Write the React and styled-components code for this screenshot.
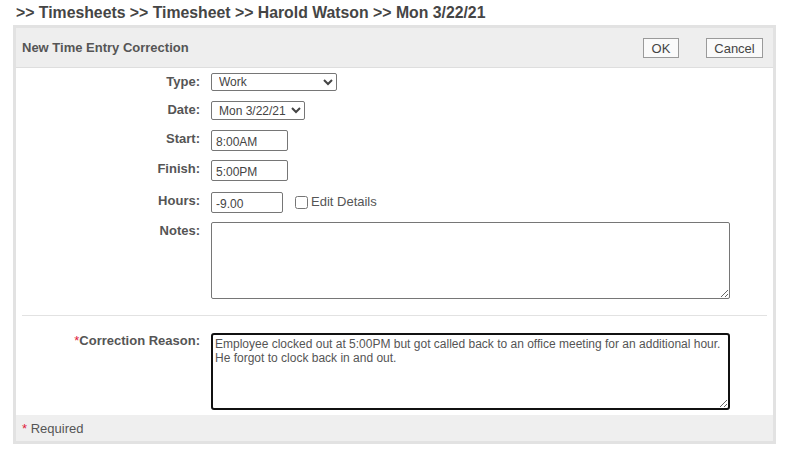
import React from "react"
import styled, { createGlobalStyle } from "styled-components"

const GlobalStyle = createGlobalStyle`
  body {
    margin: 0;
    background: #fff;
    font-family: "Liberation Sans", Arial, sans-serif;
  }
`

const Page = styled.div`
  width: 792px;
  height: 451px;
  overflow: hidden;
`

const Breadcrumb = styled.div`
  padding: 4px 0 0 16px;
  height: 21px;
  font-size: 15.8px;
  font-weight: bold;
  color: #454545;
  line-height: 18px;
`

const Panel = styled.div`
  margin-left: 13px;
  width: 757px;
  border: 3px solid #e2e2e2;
  background: #fff;
`

const Header = styled.div`
  display: flex;
  align-items: center;
  justify-content: space-between;
  height: 39px;
  padding: 0 10px 0 6px;
  background: #eeeeee;
  border-bottom: 1px solid #dedede;
`

const Title = styled.div`
  font-size: 13px;
  font-weight: bold;
  color: #555;
`

const Actions = styled.div`
  display: flex;
  gap: 27px;
  padding-top: 1px;
`

const Button = styled.button`
  height: 20px;
  width: ${p => p.$w}px;
  padding: 0;
  font-family: "Liberation Sans", Arial, sans-serif;
  font-size: 13px;
  color: #444;
  background: #fafafa;
  border: 1px solid #9a9a9a;
  border-radius: 0;
`

const Body = styled.div`
  padding: 5px 0 0;
`

const Row = styled.div`
  display: flex;
  align-items: flex-start;
  margin-top: ${p => p.$top || 0}px;
`

const Label = styled.label`
  width: 184px;
  flex: none;
  text-align: right;
  padding-top: ${p => p.$pt ?? 1}px;
  margin-right: 11px;
  font-size: 13px;
  font-weight: bold;
  color: #555;
`

const Star = styled.span`
  color: #e0203a;
  font-weight: normal;
`

const Select = styled.select`
  width: ${p => p.$w}px;
  height: ${p => p.$h}px;
  box-sizing: border-box;
  font-family: "Liberation Sans", Arial, sans-serif;
  font-size: 12px;
  color: #444;
  background: #fff;
  border: 1px solid #767676;
  border-radius: 2px;
  padding: 0 0 0 3px;
`

const Input = styled.input`
  width: ${p => p.$w}px;
  height: 21px;
  box-sizing: border-box;
  font-family: "Liberation Sans", Arial, sans-serif;
  font-size: 12px;
  color: #444;
  border: 1px solid #767676;
  border-radius: 2px;
  padding: 2px 4px 0;
`

const Check = styled.label`
  display: flex;
  align-items: center;
  margin-left: 12px;
  margin-top: 2px;
  font-size: 13px;
  color: #555;

  input {
    width: 13px;
    height: 13px;
    margin: 1px 3px 0 0;
  }
`

const TextArea = styled.textarea`
  width: 519px;
  height: 77px;
  box-sizing: border-box;
  font-family: "Liberation Sans", Arial, sans-serif;
  font-size: 12px;
  line-height: 14px;
  color: #555;
  padding: 2px 2px;
  resize: both;
  border: ${p => (p.$focus ? "2px solid #111" : "1px solid #767676")};
  border-radius: ${p => (p.$focus ? "3px" : "2px")};
  outline: none;
`

const Divider = styled.hr`
  margin: 16px 6px 0 6px;
  border: none;
  border-top: 1px solid #e2e2e2;
`

const Footer = styled.div`
  margin-top: 5px;
  height: 26px;
  padding-left: 6px;
  display: flex;
  align-items: center;
  background: #efefef;
  font-size: 13px;
  color: #555;
`

const App = () => (
  <Page>
    <GlobalStyle />
    <Breadcrumb>&gt;&gt; Timesheets &gt;&gt; Timesheet &gt;&gt; Harold Watson &gt;&gt; Mon 3/22/21</Breadcrumb>
    <Panel>
      <Header>
        <Title>New Time Entry Correction</Title>
        <Actions>
          <Button $w={36}>OK</Button>
          <Button $w={57}>Cancel</Button>
        </Actions>
      </Header>
      <Body>
        <Row>
          <Label>Type:</Label>
          <Select $w={126} $h={18} defaultValue="Work">
            <option>Work</option>
          </Select>
        </Row>
        <Row $top={10}>
          <Label>Date:</Label>
          <Select $w={94} $h={19} defaultValue="Mon 3/22/21">
            <option>Mon 3/22/21</option>
          </Select>
        </Row>
        <Row $top={10}>
          <Label>Start:</Label>
          <Input $w={77} defaultValue="8:00AM" />
        </Row>
        <Row $top={9}>
          <Label>Finish:</Label>
          <Input $w={77} defaultValue="5:00PM" />
        </Row>
        <Row $top={11}>
          <Label>Hours:</Label>
          <Input $w={72} defaultValue="-9.00" />
          <Check>
            <input type="checkbox" />
            Edit Details
          </Check>
        </Row>
        <Row $top={9}>
          <Label>Notes:</Label>
          <TextArea />
        </Row>
        <Divider />
        <Row $top={17}>
          <Label $pt={0}>
            <Star>*</Star>Correction Reason:
          </Label>
          <TextArea
            $focus
            defaultValue={
              "Employee clocked out at 5:00PM but got called back to an office meeting for an additional hour.\nHe forgot to clock back in and out."
            }
          />
        </Row>
      </Body>
      <Footer>
        <Star>*</Star>&nbsp;Required
      </Footer>
    </Panel>
  </Page>
)

export default App
